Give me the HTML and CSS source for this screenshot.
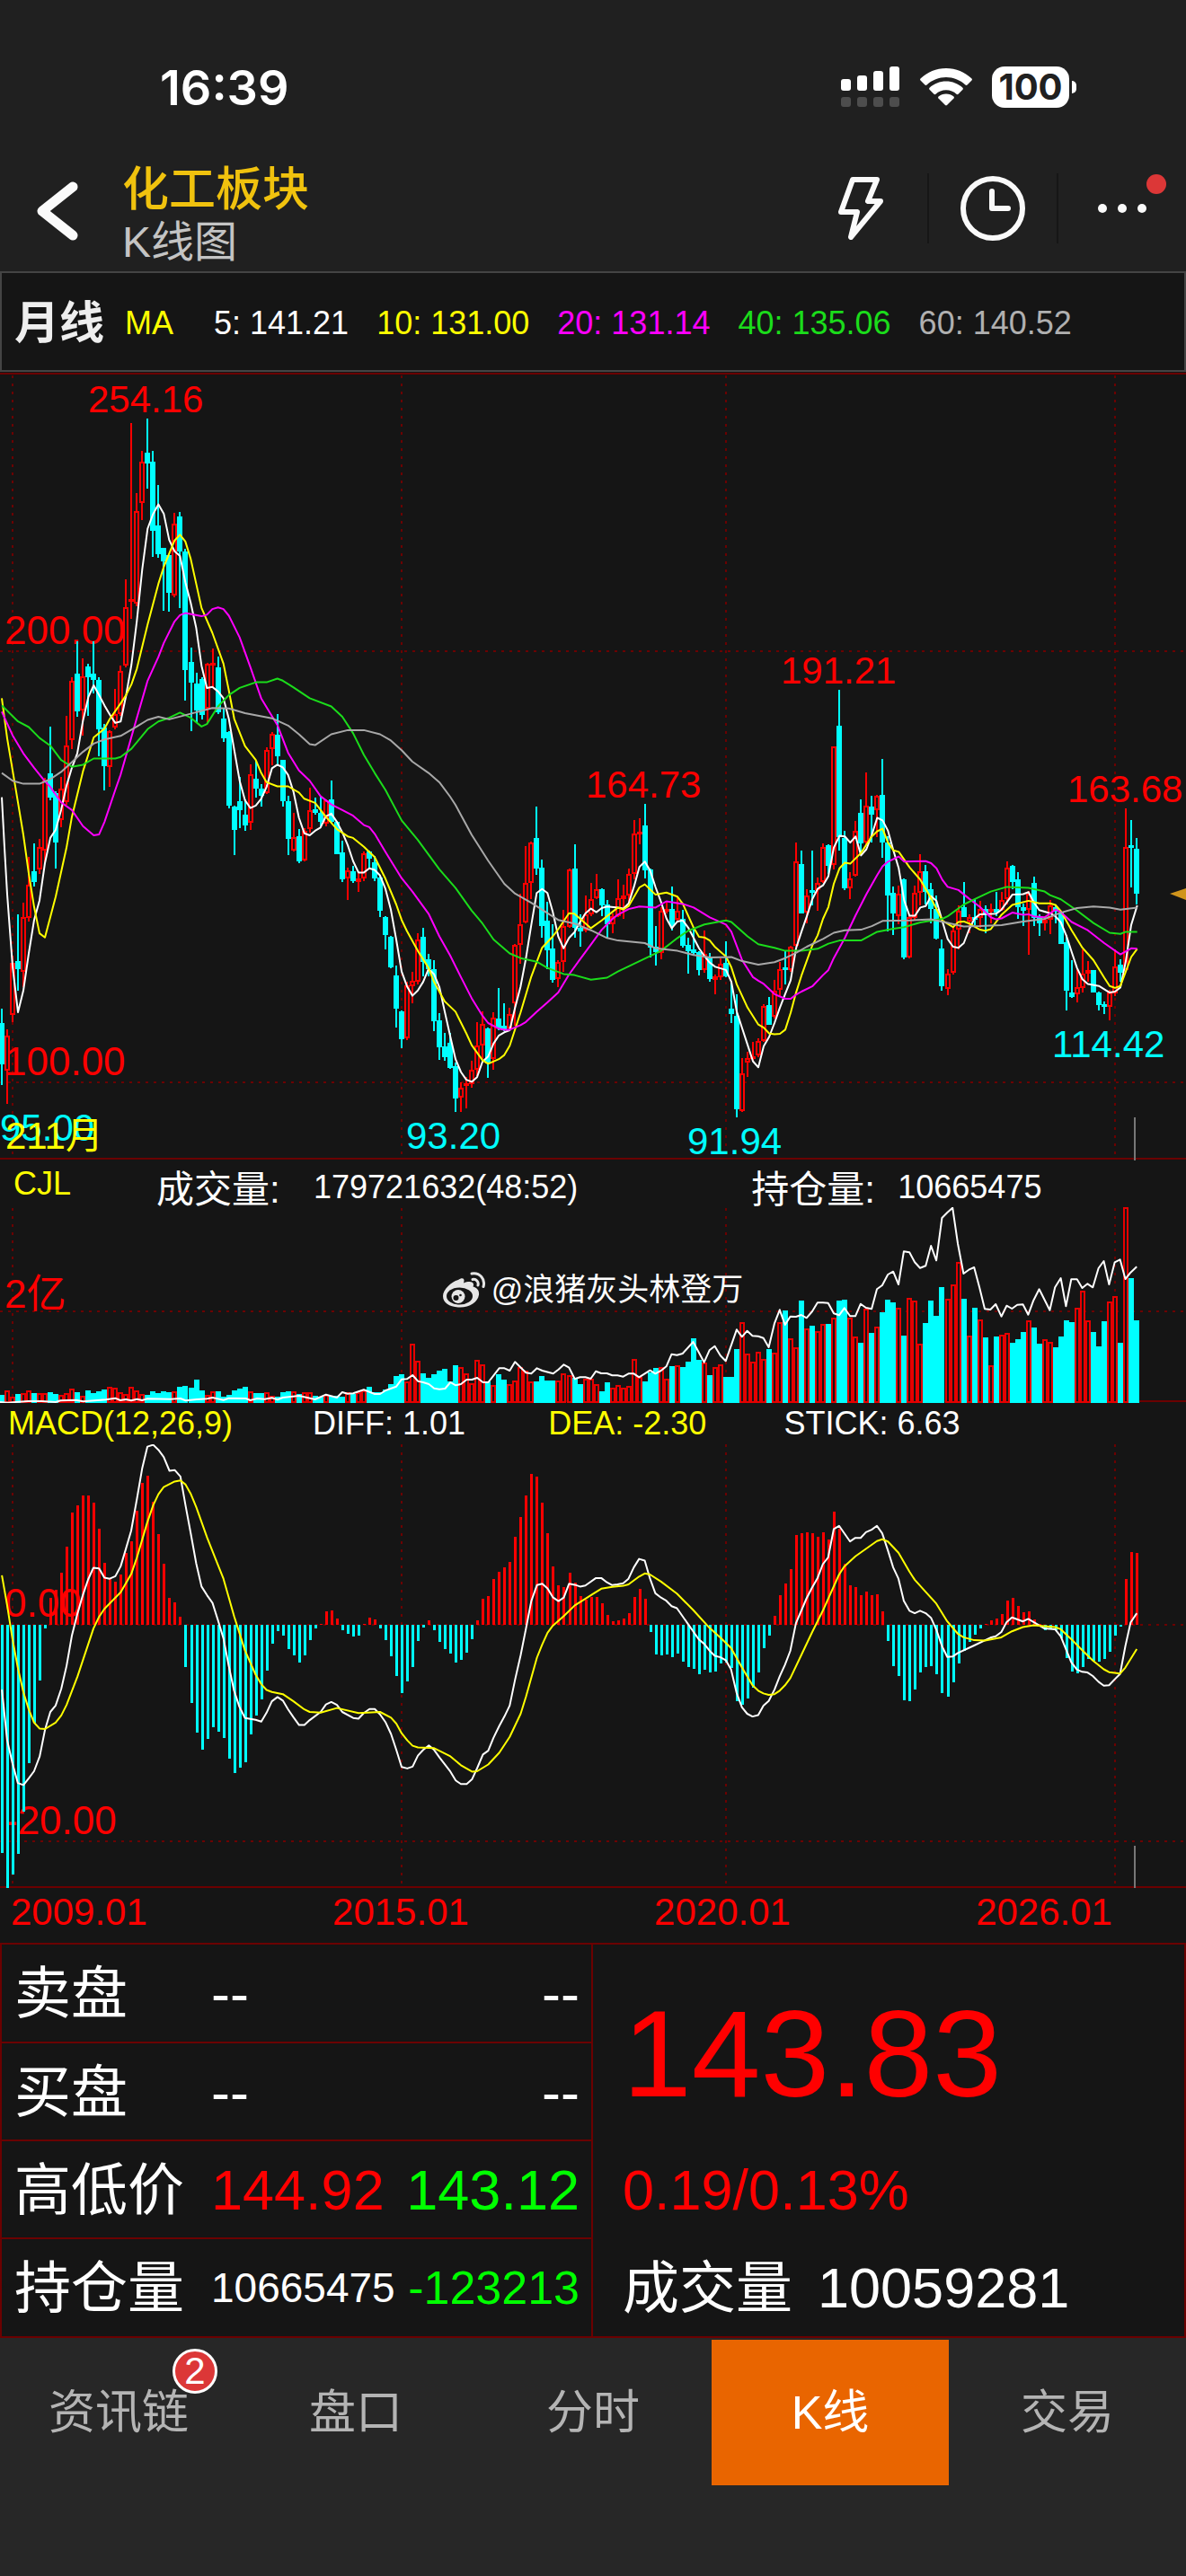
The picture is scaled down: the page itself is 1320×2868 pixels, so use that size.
FILE: index.html
```html
<!DOCTYPE html>
<html lang="zh-CN">
<head>
    <meta charset="UTF-8">
    <meta name="viewport" content="width=device-width, initial-scale=1.0">
    <link rel="stylesheet" href="styles.css">
    <title>化工板块 K线图</title>
</head>
<body>

    <!-- Barra de estado -->
    <div class="status">
        <span class="time">16:39</span>
        <div class="statusIcons">
            <svg width="66" height="46" viewBox="0 0 66 46">
                <g fill="#fff">
                    <rect x="0" y="14" width="11" height="13" rx="3"/>
                    <rect x="18" y="10" width="11" height="17" rx="3"/>
                    <rect x="36" y="5" width="11" height="22" rx="3"/>
                    <rect x="54" y="0" width="11" height="27" rx="3"/>
                </g>
                <g fill="#4d4d4d">
                    <rect x="0" y="34" width="11" height="11" rx="3"/>
                    <rect x="18" y="34" width="11" height="11" rx="3"/>
                    <rect x="36" y="34" width="11" height="11" rx="3"/>
                    <rect x="54" y="34" width="11" height="11" rx="3"/>
                </g>
            </svg>
            <svg width="58" height="42" viewBox="0 0 58 42">
                <path fill="#fff" d="M29 0c11 0 21 4.300 28.500 11.500a1.500 1.500 0 0 1 0 2L52.500 18.500a1.500 1.500 0 0 1-2 0C44.500 13 37 10 29 10S13.500 13 7.500 18.500a1.500 1.500 0 0 1-2 0L.5 13.500a1.500 1.500 0 0 1 0-2C8 4.300 18 0 29 0z"/>
                <path fill="#fff" d="M29 14.500c7 0 13.500 2.700 18.500 7.200a1.500 1.500 0 0 1 0 2l-5 5a1.500 1.500 0 0 1-2 0C37.500 26 33.500 24.300 29 24.300S20.500 26 17.500 28.700a1.500 1.500 0 0 1-2 0l-5-5a1.500 1.500 0 0 1 0-2C15.500 17.200 22 14.500 29 14.500z"/>
                <path fill="#fff" d="M29 28.500c3.300 0 6.200 1.100 8.500 3a1.500 1.500 0 0 1 0 2L30 41a1.500 1.500 0 0 1-2 0l-7.500-7.500a1.500 1.500 0 0 1 0-2c2.300-1.900 5.200-3 8.500-3z"/>
            </svg>
            <span class="battery">100</span>
        </div>
    </div>

    <!-- Cabecera -->
    <header class="top">
        <button type="button" class="back" aria-label="返回">
            <svg width="52" height="68" viewBox="0 0 52 68"><path d="M43 7L9 34l34 27" fill="none" stroke="#fafafa" stroke-width="11" stroke-linecap="round" stroke-linejoin="round"/></svg>
        </button>
        <div class="titles">
            <h1>化工板块</h1>
            <p>K线图</p>
        </div>
        <button type="button" class="tool" aria-label="闪电下单">
            <svg width="50" height="70" viewBox="0 0 50 70"><path d="M16 3h27l-10 24h14L14 67l7-28H3z" fill="none" stroke="#fafafa" stroke-width="6" stroke-linejoin="round"/></svg>
        </button>
        <button type="button" class="tool" aria-label="时间">
            <svg width="74" height="74" viewBox="0 0 74 74"><circle cx="37" cy="37" r="33" fill="none" stroke="#fafafa" stroke-width="6"/><path d="M36 18v19h18" fill="none" stroke="#fafafa" stroke-width="6" stroke-linecap="round" stroke-linejoin="round"/></svg>
        </button>
        <button type="button" class="tool more" aria-label="更多">
            <svg width="56" height="12" viewBox="0 0 56 12" fill="#fafafa"><circle cx="6" cy="6" r="5"/><circle cx="28" cy="6" r="5"/><circle cx="50" cy="6" r="5"/></svg>
            <span class="dot"></span>
        </button>
    </header>

    <!-- Medias móviles -->
    <section class="maBar">
        <button type="button" class="period">月线</button>
        <span class="yellow maName">MA</span>
        <span class="white">5: 141.21</span>
        <span class="yellow">10: 131.00</span>
        <span class="magenta">20: 131.14</span>
        <span class="green">40: 135.06</span>
        <span class="gray">60: 140.52</span>
    </section>

    <main class="charts">
        <svg id="velas" viewBox="0 4 1320 878" role="img" aria-label="K线"></svg>

        <div class="info volInfo">
            <span class="yellow">CJL</span>
            <span class="cn">成交量:</span>
            <span>179721632(48:52)</span>
            <span class="cn">持仓量:</span>
            <span>10665475</span>
        </div>
        <div class="volume">
            <svg id="volumen" viewBox="0 104 1320 218" role="img" aria-label="成交量"></svg>
            <div class="watermark">
                <svg width="48" height="40" viewBox="0 0 48 40">
                    <path fill="#e6e6e6" d="M17 9c4-3 8-2.500 6 3.500 6-2.500 13-2 10.500 4 5 1.500 7 4.500 6.500 9-1 8-10 14-21 14S0 35 0 27C0 20 9 11 17 9z"/>
                    <ellipse cx="18.500" cy="27" rx="14.500" ry="9.500" fill="#151515"/>
                    <circle cx="17" cy="27.500" r="7.500" fill="#e6e6e6"/>
                    <circle cx="14.500" cy="29" r="3" fill="#151515"/>
                    <circle cx="19.500" cy="26" r="1.300" fill="#151515"/>
                    <path fill="none" stroke="#e6e6e6" stroke-width="3" stroke-linecap="round" d="M32 2c9-1.500 15.500 6 13 14.500M33 8.500c4-.8 7 2.500 6 6.500"/>
                </svg>
                <span>@浪猪灰头林登万</span>
            </div>
        </div>

        <div class="info macdInfo">
            <span class="yellow">MACD(12,26,9)</span>
            <span>DIFF: 1.01</span>
            <span class="yellow">DEA: -2.30</span>
            <span>STICK: 6.63</span>
        </div>
        <svg id="macd" viewBox="0 48 1320 494" role="img" aria-label="MACD"></svg>

        <div class="dates">
            <span>2009.01</span>
            <span>2015.01</span>
            <span>2020.01</span>
            <span>2026.01</span>
        </div>
    </main>

    <!-- Panel de cotización -->
    <section class="quote">
        <table id="tablaPrecios">
            <tbody>
                <tr>
                    <th>卖盘</th>
                    <td>--</td>
                    <td class="right">--</td>
                </tr>
                <tr>
                    <th>买盘</th>
                    <td>--</td>
                    <td class="right">--</td>
                </tr>
                <tr>
                    <th>高低价</th>
                    <td class="up">144.92</td>
                    <td class="right down">143.12</td>
                </tr>
                <tr>
                    <th>持仓量</th>
                    <td class="small">10665475</td>
                    <td class="right down medium">-123213</td>
                </tr>
            </tbody>
        </table>
        <div class="last">
            <div class="price">143.83</div>
            <div class="change">0.19/0.13%</div>
            <div class="total"><span>成交量</span><span>10059281</span></div>
        </div>
    </section>

    <nav class="tabs">
        <a href="#news"><span class="tabText">资讯链<span class="badge">2</span></span></a>
        <a href="#book">盘口</a>
        <a href="#time">分时</a>
        <a href="#kline" class="active">K线</a>
        <a href="#trade">交易</a>
    </nav>

    <script src="script.js"></script>
</body>
</html>
```
FILE: styles.css
```css
* {
    box-sizing: border-box;
}

body {
    margin: 0;
    min-height: 100vh;
    display: flex;
    flex-direction: column;
    background-color: #272727;
    color: #fff;
    font-family: "Liberation Sans", "Noto Sans CJK SC", sans-serif;
}

button {
    padding: 0;
    border: none;
    background: none;
    color: inherit;
    font-family: inherit;
    cursor: pointer;
}

svg {
    display: block;
}

.yellow { color: #ff0; }
.white { color: #fff; }
.magenta { color: #f0f; }
.green { color: #1bdc1b; }
.gray { color: #b0b0b0; }

/* Barra de estado */
.status {
    display: flex;
    justify-content: space-between;
    align-items: center;
    height: 180px;
    padding: 14px 130px 0 178px;
    background-color: #202020;
}

.time {
    font-family: Inter, sans-serif;
    font-size: 54px;
    font-weight: 600;
}

.statusIcons {
    display: flex;
    align-items: center;
    gap: 22px;
}

.battery {
    position: relative;
    width: 86px;
    height: 46px;
    border-radius: 14px;
    background-color: #fff;
    color: #202020;
    font-family: Inter, sans-serif;
    font-size: 40px;
    font-weight: 700;
    line-height: 46px;
    text-align: center;
}

.battery::after {
    content: "";
    position: absolute;
    right: -8px;
    top: 16px;
    width: 5px;
    height: 14px;
    border-radius: 0 5px 5px 0;
    background-color: #fff;
}

/* Cabecera */
.top {
    display: flex;
    align-items: center;
    height: 122px;
    padding-left: 38px;
    background-color: #202020;
}

.back {
    margin-top: -12px;
}

.titles {
    flex: 1;
    margin: -2px 0 0 46px;
}

.titles h1 {
    margin: 0;
    color: #f0c20e;
    font-size: 52px;
    font-weight: 500;
    line-height: 60px;
}

.titles p {
    margin: 0;
    color: #c4c4c4;
    font-size: 48px;
    line-height: 58px;
}

.tool {
    position: relative;
    display: flex;
    justify-content: center;
    align-items: center;
    width: 144px;
    height: 78px;
    margin-top: -18px;
    border-left: 2px solid #161616;
}

.titles + .tool {
    width: 148px;
    border-left: none;
}

.dot {
    position: absolute;
    right: 22px;
    top: 1px;
    width: 22px;
    height: 22px;
    border-radius: 50%;
    background-color: #dc3737;
}

/* Medias móviles */
.maBar {
    display: flex;
    align-items: center;
    gap: 31px;
    height: 112px;
    padding: 4px 14px 0;
    border: 2px solid #444;
    background-color: #151515;
    font-size: 36px;
}

.period {
    margin-top: -10px;
    color: #eee;
    font-size: 50px;
    font-weight: 700;
}

.maName {
    margin: 0 14px 0 -8px;
}

/* Gráficos */
.charts {
    background-color: #151515;
}

.charts svg {
    width: 100%;
    height: auto;
}

.charts text {
    font-size: 42px;
}

.charts .eje {
    font-size: 44px;
}

.info {
    display: flex;
    align-items: center;
    font-size: 36px;
    white-space: nowrap;
}

.volInfo {
    height: 52px;
    padding: 8px 0 0 15px;
}

.volInfo .yellow {
    width: 159px;
    line-height: 36px;
    margin-top: -8px;
}

.volInfo .cn {
    width: 175px;
    margin-top: -4px;
    font-size: 42px;
}

.volInfo .cn ~ .cn {
    margin-left: 193px;
    width: 163px;
}

.volume {
    position: relative;
}

.volume .watermark {
    position: absolute;
    left: 0;
    right: 0;
    top: 67px;
    display: flex;
    justify-content: center;
    align-items: center;
    gap: 6px;
    font-size: 35px;
    line-height: 50px;
}

.watermark svg {
    width: 48px;
}

.macdInfo {
    height: 46px;
    padding-left: 9px;
}

.macdInfo span {
    width: 20%;
}

.macdInfo span:first-child {
    width: 339px;
}

.dates {
    display: flex;
    justify-content: space-between;
    padding: 0 82px 7px 12px;
    color: red;
    font-size: 42px;
    line-height: 54px;
}

/* Cotización */
.quote {
    display: flex;
    border: 2px solid #6b0000;
    background-color: #151515;
    font-size: 63px;
}

#tablaPrecios {
    width: 50%;
    border-collapse: collapse;
    border-right: 2px solid #6b0000;
}

#tablaPrecios tr + tr {
    border-top: 2px solid #6b0000;
}

#tablaPrecios th,
#tablaPrecios td {
    height: 109px;
    padding: 0;
    font-weight: 400;
    line-height: 100px;
    text-align: left;
}

#tablaPrecios th {
    width: 233px;
    padding-left: 14px;
}

#tablaPrecios .right {
    padding-right: 13px;
    text-align: right;
}

#tablaPrecios .small {
    font-size: 46px;
}

#tablaPrecios .medium {
    font-size: 52px;
}

.up {
    color: red;
}

.down {
    color: #0f0;
}

.last {
    flex: 1;
    padding-left: 33px;
}

.price {
    padding-top: 24px;
    color: red;
    font-size: 138px;
    line-height: 194px;
}

.change {
    color: red;
    line-height: 110px;
}

.total {
    display: flex;
    gap: 28px;
    line-height: 108px;
}

/* Pestañas */
.tabs {
    display: grid;
    grid-template-columns: repeat(5, 1fr);
    padding-top: 2px;
}

.tabs a {
    color: #b4b4b4;
    font-size: 52px;
    line-height: 162px;
    text-align: center;
    text-decoration: none;
}

.tabs .active {
    background-color: #e96500;
    color: #fff;
}

.tabText {
    position: relative;
}

.badge {
    position: absolute;
    right: -32px;
    top: -42px;
    width: 50px;
    height: 50px;
    border: 3px solid #fff;
    border-radius: 50%;
    background-color: #dc3737;
    color: #fff;
    font-size: 42px;
    line-height: 44px;
}
```
FILE: script.js
```javascript
// Una vela por mes: color, máximo, techo, base, mínimo
const velas = `c1242,1270,1350,1390 r1283,1295,1362,1427 r1140,1153,1255,1268 c1060,1149,1165,1207 r1037,1065,1171,1200
r947,1001,1067,1073 c921,975,996,1005 r913,928,972,980 r795,799,936,960 c695,785,832,838
c820,824,919,970 r793,816,876,890 r675,732,842,846 r600,606,722,738 c529,592,666,676
r563,597,664,712 c573,578,600,674 c529,592,604,630 c599,604,700,752 c690,697,771,818
r702,703,774,811 r622,670,697,700 r577,587,670,675 r409,463,576,580 r107,447,452,486
r243,277,456,462 r160,181,261,295 c98,163,185,233 c160,182,315,366 c227,305,360,368
c348,349,374,470 c363,363,435,472 r281,302,441,445 c279,287,356,465 c351,355,586,645
c541,570,610,704 c590,611,663,688 c600,602,673,682 r572,574,660,687 r543,571,577,620
c560,580,668,670 c660,679,718,725 c704,706,849,853 c848,851,895,945 c793,840,858,892
c837,865,886,898 r768,787,882,895 c762,796,816,832 c806,815,829,850 r736,740,824,826
r705,709,738,770 c671,710,753,772 c759,760,839,851 c829,840,913,944 r862,910,936,938
c893,907,956,960 r892,898,955,957 r813,858,894,900 c832,855,862,866 c830,863,880,890
r836,838,884,888 c800,837,880,884 c878,880,942,943 c916,939,992,997 r968,974,990,1031
c965,975,994,999 r975,990,996,1015 r937,940,990,994 c936,937,951,968 c946,958,990,994
c985,988,1053,1065 c1062,1064,1100,1127 c1101,1103,1162,1163 c1159,1178,1243,1278 c1246,1248,1301,1318
r1190,1197,1299,1303 r1170,1189,1198,1232 r1096,1108,1190,1195 c1086,1102,1152,1180 c1136,1147,1165,1180
c1148,1166,1266,1285 c1250,1264,1317,1342 c1290,1316,1337,1344 c1290,1308,1358,1359 c1347,1354,1416,1443
r1385,1395,1415,1442 r1375,1386,1390,1436 r1343,1360,1388,1396 r1268,1313,1360,1372 r1247,1272,1313,1340
c1278,1281,1348,1377 r1249,1259,1340,1361 c1202,1261,1280,1284 c1232,1276,1284,1286 r1240,1252,1280,1284
r1116,1119,1232,1275 r1020,1078,1118,1155 r927,998,1075,1077 r918,920,998,1030 c850,912,971,983
c953,968,1082,1105 c1035,1071,1129,1165 c1078,1126,1187,1192 r1148,1152,1185,1201 r1050,1082,1152,1170
r970,972,1084,1086 c923,971,1085,1104 c1059,1086,1092,1122 r1022,1060,1090,1094 r998,1030,1060,1062
r981,1010,1028,1030 c1009,1010,1042,1062 c1031,1040,1078,1104 r1058,1062,1078,1095 r991,1028,1062,1064
r1002,1022,1030,1068 r971,981,1022,1040 r877,902,981,991 r873,899,904,923 c845,886,974,989
c970,972,1123,1143 c1082,1122,1133,1158 r1046,1053,1134,1146 r1034,1048,1053,1058 c1006,1049,1080,1090
r1025,1052,1070,1073 c1050,1068,1120,1123 c1104,1118,1130,1174 c1088,1128,1134,1140 c1130,1132,1168,1178
r1091,1136,1168,1172 c1135,1143,1185,1190 r1176,1180,1186,1214 r1145,1155,1182,1187 c1112,1153,1180,1181
c1190,1243,1252,1270 c1214,1256,1438,1453 r1338,1367,1441,1443 r1325,1338,1346,1375 r1306,1334,1340,1343
r1300,1305,1332,1336 r1233,1237,1305,1307 c1220,1236,1273,1274 r1187,1207,1258,1262 r1152,1165,1206,1218
c1131,1162,1168,1195 r1120,1122,1168,1170 r919,956,1120,1122 c935,961,1057,1058 r1010,1022,1056,1077
c936,1013,1017,1042 r987,998,1012,1053 r921,928,996,998 c923,925,965,980 r733,734,964,972
c624,693,909,936 c897,911,1009,1012 r978,990,1008,1029 r878,897,984,986 c836,863,922,945
r784,849,920,925 c830,851,866,920 r827,829,857,909 c757,828,920,950 c908,920,1022,1093
c1005,1017,1057,1100 r1004,1020,1062,1078 c989,991,1143,1147 r1062,1065,1143,1145 r1003,1018,1066,1070
r943,975,1018,1042 c963,975,1016,1040 c998,1010,1048,1077 c1023,1048,1107,1108 c1108,1125,1199,1207
r1165,1174,1203,1216 r1082,1090,1173,1176 r1042,1052,1088,1128 c997,1046,1064,1065 r1060,1064,1074,1096
c1030,1064,1068,1080 r1033,1049,1066,1085 c1042,1048,1057,1095 r1038,1048,1053,1076 c1016,1048,1056,1062
r1016,1031,1050,1052 r956,969,1030,1040 c964,966,997,1010 c977,992,1046,1068 c1038,1045,1052,1082
r1014,1020,1050,1138 c986,998,1067,1082 c1060,1062,1076,1101 r1062,1070,1076,1090 r1031,1042,1070,1098
c1040,1046,1054,1077 c1055,1056,1116,1117 c1100,1113,1208,1246 c1148,1210,1220,1221 r1165,1201,1215,1230
r1127,1174,1202,1210 r1150,1168,1174,1190 c1167,1168,1210,1211 c1209,1211,1236,1246 c1229,1233,1237,1253
r1206,1210,1238,1265 r1128,1160,1213,1218 c1146,1157,1172,1190 r854,928,1168,1170 c876,925,931,1007
c911,932,1020,1040`.split(/\s+/).map(v => ({
    color: v[0] === 'r' ? '#f00' : '#0ff',
    sube: v[0] === 'r',
    p: v.slice(1).split(',').map(Number)
}));

const ma5 = '6,832 15,930 24,1020 33,1090 42,1160 60,1249 78,1207 96,1135 114,1070 132,1032 150,960 168,911 186,895 204,857 222,810 240,775 258,747 277,684 295,638 313,615 331,634 349,654 367,672 385,688 403,685 421,635 439,575 457,490 475,390 493,311 511,283 529,264 547,282 565,333 583,355 601,364 619,415 637,455 655,503 673,577 691,620 709,618 728,627 746,640 764,680 782,740 800,800 818,838 836,853 854,848 872,835 890,812 908,776 926,769 944,774 962,789 980,822 998,872 1016,902 1034,906 1052,897 1070,891 1088,869 1106,864 1125,880 1143,900 1161,925 1179,956 1197,978 1215,978 1233,970 1251,973 1269,984 1287,1010 1305,1050 1323,1108 1341,1170 1359,1199 1377,1217 1395,1207 1413,1190 1431,1165 1449,1175 1467,1200 1485,1248 1503,1295 1521,1340 1539,1365 1557,1380 1575,1384 1593,1375 1611,1345 1630,1335 1648,1310 1666,1294 1684,1288 1702,1284 1720,1240 1738,1200 1756,1145 1774,1080 1792,1018 1810,1010 1828,1018 1846,1055 1864,1102 1882,1125 1900,1105 1918,1094 1936,1075 1955,1057 1973,1048 1991,1055 2009,1047 2027,1044 2063,1046 2081,1048 2099,1038 2117,1005 2135,967 2153,957 2171,975 2189,1007 2207,1035 2225,1067 2243,1086 2262,1073 2280,1071 2298,1085 2334,1125 2352,1140 2370,1153 2388,1161 2424,1167 2442,1190 2460,1248 2478,1280 2496,1312 2514,1344 2532,1356 2550,1315 2568,1297 2586,1270 2604,1240 2622,1213 2640,1187 2658,1125 2676,1093 2694,1063 2712,1030 2730,1010 2748,1003 2766,985 2784,930 2803,907 2821,908 2839,920 2857,908 2875,945 2893,933 2911,905 2929,872 2947,877 2965,897 2983,935 3001,970 3019,1032 3037,1062 3055,1062 3073,1046 3091,1043 3109,1024 3127,1033 3146,1072 3164,1107 3182,1122 3200,1124 3218,1115 3236,1088 3254,1067 3272,1059 3326,1058 3344,1050 3380,1021 3416,1020 3434,1016 3452,1036 3470,1051 3506,1057 3524,1063 3542,1075 3560,1100 3578,1132 3596,1163 3614,1185 3632,1194 3669,1198 3705,1211 3723,1209 3741,1201 3759,1150 3777,1080 3797,1042';
const ma10 = '6,640 24,718 42,780 60,842 78,905 96,980 114,1045 132,1096 150,1104 186,1025 222,930 240,870 277,782 313,716 349,699 367,680 403,650 421,634 439,613 457,583 493,497 529,418 547,385 583,334 601,323 619,336 637,370 673,465 709,513 746,573 764,625 782,680 818,733 854,760 872,785 890,803 926,811 962,811 998,823 1016,835 1052,843 1088,870 1125,894 1161,908 1179,911 1215,928 1251,948 1287,990 1323,1040 1341,1070 1359,1092 1395,1130 1431,1163 1449,1190 1485,1228 1521,1248 1557,1290 1575,1313 1611,1342 1630,1349 1666,1340 1684,1332 1702,1314 1738,1250 1774,1180 1810,1124 1846,1102 1864,1088 1900,1057 1918,1058 1973,1086 2009,1071 2063,1046 2081,1050 2099,1043 2135,1007 2153,1001 2189,1021 2225,1017 2262,1025 2280,1039 2316,1085 2334,1103 2352,1104 2370,1110 2388,1123 2424,1141 2442,1162 2460,1195 2496,1240 2532,1273 2550,1279 2568,1290 2586,1292 2604,1291 2622,1283 2640,1250 2658,1211 2676,1178 2712,1120 2730,1100 2748,1068 2766,1045 2784,1000 2803,970 2821,959 2839,961 2875,940 2911,908 2929,898 2947,893 2965,920 2983,935 3001,938 3037,968 3073,992 3109,1028 3146,1071 3182,1084 3200,1074 3218,1073 3236,1077 3272,1089 3290,1091 3308,1088 3344,1060 3380,1041 3434,1033 3470,1038 3506,1038 3524,1041 3542,1053 3578,1090 3614,1124 3651,1148 3687,1182 3705,1198 3723,1202 3741,1198 3759,1170 3777,1142 3797,1126';
const ma20 = '6,666 42,712 78,747 114,775 150,801 168,812 204,842 240,857 277,888 313,906 331,904 349,880 385,818 403,788 439,715 457,678 493,606 529,560 547,533 583,491 601,479 619,475 673,481 691,478 709,467 728,464 746,467 764,480 800,522 836,580 872,640 926,692 962,746 998,780 1034,800 1070,830 1106,846 1143,857 1179,868 1215,886 1233,890 1251,903 1287,938 1323,972 1341,989 1377,1015 1431,1058 1467,1102 1503,1139 1539,1181 1575,1222 1611,1256 1630,1270 1666,1281 1684,1283 1702,1283 1738,1274 1756,1268 1792,1248 1828,1230 1864,1211 1900,1176 1936,1147 1973,1118 2009,1089 2045,1068 2063,1060 2099,1049 2135,1044 2189,1046 2225,1034 2280,1039 2316,1046 2370,1065 2424,1079 2442,1093 2478,1148 2514,1181 2532,1188 2550,1194 2586,1214 2622,1223 2640,1223 2658,1215 2676,1209 2712,1199 2748,1177 2766,1167 2784,1144 2821,1105 2857,1061 2893,1020 2929,983 2947,966 2965,957 3001,947 3019,957 3091,956 3109,960 3127,970 3146,992 3164,1006 3200,1012 3236,1029 3272,1045 3308,1065 3326,1069 3344,1067 3380,1056 3416,1060 3434,1059 3452,1063 3488,1065 3524,1050 3542,1055 3578,1074 3632,1090 3687,1115 3741,1137 3777,1125 3797,1126';
const ma40 = '6,654 60,685 96,696 132,717 168,732 204,760 240,773 277,769 313,757 385,757 403,754 439,738 493,700 529,685 565,678 601,668 637,678 673,695 691,690 728,656 764,634 800,620 854,609 890,609 926,602 944,606 980,619 1034,640 1106,656 1143,676 1179,708 1215,750 1251,785 1287,818 1341,877 1395,915 1467,972 1521,1008 1575,1052 1611,1077 1648,1108 1702,1135 1738,1144 1792,1151 1828,1163 1882,1175 1918,1177 1973,1186 2027,1182 2063,1170 2135,1150 2207,1130 2262,1105 2298,1091 2352,1079 2424,1071 2442,1074 2496,1102 2532,1117 2586,1124 2622,1130 2676,1130 2730,1126 2766,1116 2803,1110 2875,1110 2929,1093 2983,1087 3019,1084 3073,1075 3146,1068 3164,1063 3218,1040 3254,1030 3308,1015 3362,1006 3434,1008 3488,1015 3506,1022 3542,1030 3596,1052 3651,1076 3705,1095 3741,1097 3759,1093 3797,1093';
const ma60 = '6,785 42,800 78,806 132,806 168,797 204,783 240,764 277,744 313,728 349,720 403,713 457,695 493,682 529,676 565,681 637,670 709,659 764,660 818,669 908,679 962,693 998,710 1034,729 1052,731 1106,710 1161,702 1215,702 1269,710 1305,722 1341,741 1377,763 1431,785 1467,803 1503,831 1521,847 1575,905 1630,955 1684,1000 1720,1019 1774,1037 1828,1057 1864,1070 1918,1077 1973,1090 2027,1105 2063,1110 2153,1115 2189,1125 2262,1130 2316,1138 2370,1143 2442,1142 2478,1150 2532,1157 2586,1152 2622,1144 2658,1134 2694,1122 2748,1107 2784,1095 2821,1090 2875,1089 2911,1082 2947,1072 3037,1071 3109,1069 3164,1076 3218,1083 3272,1082 3344,1080 3416,1073 3488,1068 3542,1056 3596,1047 3651,1044 3705,1046 3741,1050 3797,1046';

// Altura de cada barra de volumen
const volumen = [938,923,945,936,934,925,933,934,934,930,936,940,932,918,929,943,923,934,927,921,911,916,929,935,913,923,937,939,927,933,928,930,928,912,908,915,889,923,940,927,926,945,940,924,917,911,927,934,933,930,941,944,930,928,927,935,931,931,942,945,940,942,942,944,931,937,931,923,913,930,930,920,903,875,870,893,767,825,866,883,871,857,852,893,841,847,867,901,822,838,893,905,869,887,904,892,845,858,893,893,875,891,892,890,868,874,882,903,886,886,902,928,897,915,905,915,908,818,880,895,865,850,847,884,843,841,845,829,750,822,830,873,845,837,880,878,785,697,800,828,795,818,787,798,697,658,749,780,624,718,707,727,702,702,681,624,622,681,745,766,652,733,711,664,621,631,648,742,614,625,768,698,623,675,578,617,571,496,617,741,647,686,747,841,743,739,732,764,752,729,689,714,768,753,762,779,743,690,697,648,590,690,728,778,692,628,610,764,313,549,689];
const posiciones = '0,963 20,965 50,962 75,960 110,960 147,963 160,958 200,956 220,961 280,955 305,950 318,957 333,954 347,958 362,953 376,957 390,952 450,953 477,951 491,958 520,954 548,952 562,948 591,956 605,950 650,951 662,957 680,951 700,953 719,949 734,955 748,948 791,942 833,954 862,938 891,948 905,930 919,935 934,934 962,922 991,936 1005,936 1020,924 1048,911 1062,887 1076,886 1091,873 1105,893 1119,897 1134,903 1148,917 1162,920 1177,918 1191,897 1205,907 1219,903 1234,888 1248,888 1262,882 1277,897 1291,897 1305,875 1320,850 1334,850 1348,858 1362,829 1391,865 1405,868 1420,850 1434,858 1463,868 1477,854 1491,838 1505,848 1520,886 1534,880 1548,880 1562,885 1576,860 1590,867 1605,867 1619,874 1633,874 1648,878 1662,868 1676,868 1690,880 1705,868 1719,857 1733,868 1748,858 1762,844 1776,803 1790,806 1805,801 1833,762 1848,797 1862,830 1876,790 1890,776 1905,808 1919,826 1948,721 1962,745 1976,725 1990,742 2005,743 2019,749 2033,780 2048,700 2062,655 2076,705 2090,677 2105,678 2119,672 2133,682 2148,660 2162,631 2176,631 2190,632 2205,667 2219,673 2233,649 2248,676 2262,676 2276,635 2290,648 2305,652 2319,586 2333,573 2348,537 2362,527 2376,570 2390,460 2405,463 2419,496 2433,515 2448,508 2462,441 2476,490 2491,348 2505,330 2519,314 2533,435 2548,534 2562,521 2576,513 2590,580 2604,652 2619,654 2633,636 2648,677 2662,641 2676,651 2690,638 2705,637 2719,671 2733,623 2748,586 2776,656 2790,580 2805,549 2819,643 2833,553 2848,553 2862,582 2876,568 2890,580 2905,516 2919,492 2933,570 2948,496 2962,487 2976,552 2990,530 3006,511';

// Histograma MACD, la línea cero está en 629
const stick = [1271,1372,1332,1274,1155,1020,905,787,639,553,530,482,410,314,294,265,265,285,360,454,498,509,488,428,394,309,231,209,283,374,459,555,566,608,749,850,933,980,950,917,931,948,1007,1047,1032,1017,938,884,840,758,682,647,661,699,715,737,715,673,641,626,592,588,611,645,655,663,661,628,610,614,640,673,717,773,821,789,749,675,638,618,644,678,699,711,736,728,709,671,617,556,549,502,481,469,452,381,325,265,206,212,287,373,466,518,523,484,510,549,560,552,552,570,601,620,616,613,596,551,529,556,650,713,715,712,720,711,734,749,754,769,756,764,760,738,737,750,845,856,837,808,764,695,661,605,547,513,473,376,373,368,373,382,369,390,311,360,457,519,524,547,537,545,543,593,676,747,773,843,844,811,765,748,746,769,822,833,791,738,702,677,658,639,627,616,611,599,562,553,577,594,592,615,626,645,640,645,667,723,760,766,749,727,730,733,727,705,661,634,502,425,427];
const diff = '5,812 19,955 33,1020 47,1075 62,1081 76,1062 90,1042 105,1000 119,925 133,875 147,857 162,810 176,745 190,660 205,597 219,546 233,502 247,469 262,471 276,497 290,500 305,493 319,465 333,415 347,365 362,275 376,190 390,128 405,123 419,137 433,157 448,196 462,194 477,212 491,295 505,375 519,457 533,522 548,547 562,568 576,615 591,668 605,745 619,815 633,860 648,892 676,897 691,902 705,877 719,845 734,833 748,843 762,868 776,890 791,912 805,912 819,898 848,875 862,854 876,847 891,855 905,875 934,892 948,894 962,878 977,867 991,867 1005,882 1020,905 1034,937 1048,982 1062,1030 1077,1034 1091,1029 1105,998 1119,982 1134,969 1148,982 1162,1003 1191,1043 1205,1068 1219,1078 1234,1078 1248,1065 1262,1033 1277,995 1291,984 1305,948 1320,915 1334,888 1348,857 1362,785 1377,715 1391,640 1405,563 1420,518 1434,514 1448,527 1462,552 1477,563 1491,553 1505,514 1520,517 1534,522 1548,519 1576,498 1590,498 1605,510 1619,518 1633,516 1648,513 1662,500 1676,468 1690,444 1705,449 1719,500 1733,541 1748,553 1762,562 1776,577 1790,583 1819,627 1848,671 1862,683 1876,702 1890,717 1905,721 1919,729 1933,755 1948,822 1962,862 1976,880 1990,888 2005,884 2019,857 2033,844 2048,812 2062,775 2076,742 2090,703 2105,625 2133,555 2148,524 2162,498 2176,459 2190,440 2205,360 2219,351 2248,395 2262,385 2276,385 2290,369 2305,362 2319,351 2333,372 2348,420 2362,468 2376,500 2390,562 2405,590 2419,597 2433,590 2448,597 2462,610 2476,643 2491,690 2505,720 2519,719 2533,709 2576,688 2619,666 2633,662 2648,650 2662,622 2676,609 2705,620 2719,613 2733,622 2762,640 2790,642 2805,662 2833,735 2848,756 2862,762 2876,764 2890,774 2905,790 2919,801 2933,800 2948,783 2962,768 2976,690 2990,623 3006,597';
const dea = '5,490 19,575 33,670 47,750 62,820 76,868 90,905 105,922 119,923 147,905 162,885 176,855 205,775 233,685 247,640 262,607 276,585 319,538 347,487 362,440 390,340 405,293 419,262 433,242 462,226 477,223 491,235 505,262 519,298 548,385 576,460 591,500 619,605 648,702 676,770 691,797 705,813 719,819 748,825 776,845 805,868 819,875 848,877 891,864 948,878 1005,875 1034,891 1048,908 1062,935 1077,955 1091,970 1105,975 1148,977 1191,1000 1219,1025 1248,1043 1262,1042 1291,1023 1320,990 1348,945 1377,880 1391,832 1420,722 1434,685 1448,652 1462,632 1491,605 1520,575 1568,543 1590,528 1619,523 1648,520 1662,516 1690,494 1705,485 1719,488 1748,508 1790,542 1833,588 1876,638 1905,666 1933,695 1962,750 1990,800 2005,815 2019,823 2033,827 2048,825 2062,815 2076,800 2090,780 2119,715 2148,650 2176,590 2219,488 2233,465 2262,437 2319,394 2333,389 2348,395 2376,427 2405,480 2419,503 2448,537 2476,570 2505,620 2533,655 2548,665 2576,673 2605,674 2648,665 2676,648 2705,636 2733,631 2790,636 2805,642 2833,670 2862,701 2890,730 2919,755 2933,763 2962,767 2976,750 3006,698';

const ROJO = '#6b0000';
const PASO = 1263 / 210;

function centro(i) {
    return Math.round(2 + i * PASO);
}

function linea(x1, y1, x2, y2, color, extra) {
    return `<line x1="${x1}" y1="${y1}" x2="${x2}" y2="${y2}" stroke="${color}" stroke-width="2" ${extra || ''}/>`;
}

function rect(x, y, w, h, color) {
    return `<rect x="${x}" y="${y}" width="${w}" height="${h}" fill="${color}"/>`;
}

function hueco(x, y, w, h, color) {
    return `<rect x="${x + 1}" y="${y + 1}" width="${w - 2}" height="${Math.max(h - 2, 0.5)}" fill="#151515" stroke="${color}" stroke-width="2"/>`;
}

function curva(puntos, ex, ey, color, ancho) {
    const p = puntos.split(' ').map(par => {
        const [x, y] = par.split(',');
        return (x * ex).toFixed(1) + ',' + (y * ey).toFixed(1);
    }).join(' ');
    return `<polyline points="${p}" fill="none" stroke="${color}" stroke-width="${ancho}" stroke-linejoin="round"/>`;
}

function texto(x, y, contenido, color) {
    return `<text x="${x}" y="${y}" fill="${color}">${contenido}</text>`;
}

// Etiqueta del eje vertical
function eje(y, contenido) {
    return `<text class="eje" x="5" y="${y}" fill="#f00">${contenido}</text>`;
}

// Cuadrícula punteada
function rejilla(arriba, abajo, horizontales) {
    const dash = 'stroke-dasharray="3 6"';
    let s = '';
    [14, 447, 808, 1241].forEach(x => s += linea(x, arriba, x, abajo, ROJO, dash));
    horizontales.forEach(y => s += linea(0, y, 1320, y, ROJO, dash));
    return s;
}

function dibujarVelas() {
    const ey = 0.574;
    let s = linea(0, 6, 1320, 6, ROJO) + linea(0, 880, 1320, 880, ROJO);
    s += rejilla(8, 880, [315, 795]);
    s += eje(307, '200.00') + eje(787, '100.00');
    velas.forEach((v, i) => {
        const x = centro(i);
        const [max, techo, base, min] = v.p.map(n => Math.round(n * ey));
        const alto = Math.max(base - techo, 3);
        s += rect(x - 1, max, 2, Math.max(techo - max, 0), v.color);
        s += rect(x - 1, base, 2, Math.max(min - base, 0), v.color);
        s += v.sube ? hueco(x - 3, techo, 6, alto, v.color) : rect(x - 3, techo, 6, alto, v.color);
    });
    s += curva(ma5, 1 / 3, ey, '#fff', 2);
    s += curva(ma10, 1 / 3, ey, '#ff0', 2);
    s += curva(ma20, 1 / 3, ey, '#f0f', 2);
    s += curva(ma40, 1 / 3, ey, '#1bdc1b', 2);
    s += curva(ma60, 1 / 3, ey, '#a8a8a8', 2);
    s += texto(98, 49, '254.16', '#f00') + texto(652, 478, '164.73', '#f00');
    s += texto(869, 351, '191.21', '#f00') + texto(1188, 483, '163.68', '#f00');
    s += texto(0, 860, '95.00', '#0ff') + texto(6, 869, '211月', '#ff0');
    s += texto(452, 869, '93.20', '#0ff') + texto(765, 875, '91.94', '#0ff');
    s += texto(1171, 767, '114.42', '#0ff');
    s += linea(1263, 834, 1263, 882, '#777');
    s += '<path d="M1302 585l18-6v13z" fill="#d0941c"/>';
    document.getElementById('velas').innerHTML = s;
}

function dibujarVolumen() {
    let s = rejilla(105, 320, [220]);
    s += linea(0, 320, 1320, 320, ROJO);
    s += eje(216, '2亿');
    volumen.forEach((v, i) => {
        const x = centro(i);
        const y = Math.round(v / 3);
        s += velas[i].sube ? hueco(x - 3, y, 6, 322 - y, '#e60000') : rect(x - 3, y, 6, 322 - y, '#0ff');
    });
    s += curva(posiciones, 1 / 2.376, 1 / 3, '#fff', 2);
    document.getElementById('volumen').innerHTML = s;
}

function dibujarMacd() {
    const ey = 1 / 2.529;
    const cero = 249;
    let s = rejilla(48, 540, [cero, 490]);
    s += linea(0, 541, 1320, 541, ROJO);
    s += eje(240, '0.00') + eje(482, '-20.00');
    stick.forEach((v, i) => {
        const x = centro(i);
        const y = Math.round(v * ey);
        s += y < cero ? rect(x - 1, y, 3, cero - y, '#f00') : rect(x - 1, cero, 3, y - cero, '#0ff');
    });
    s += curva(diff, 1 / 2.376, ey, '#fff', 2);
    s += curva(dea, 1 / 2.376, ey, '#ff0', 2);
    s += linea(1263, 495, 1263, 542, '#777');
    document.getElementById('macd').innerHTML = s;
}

dibujarVelas();
dibujarVolumen();
dibujarMacd();
```
